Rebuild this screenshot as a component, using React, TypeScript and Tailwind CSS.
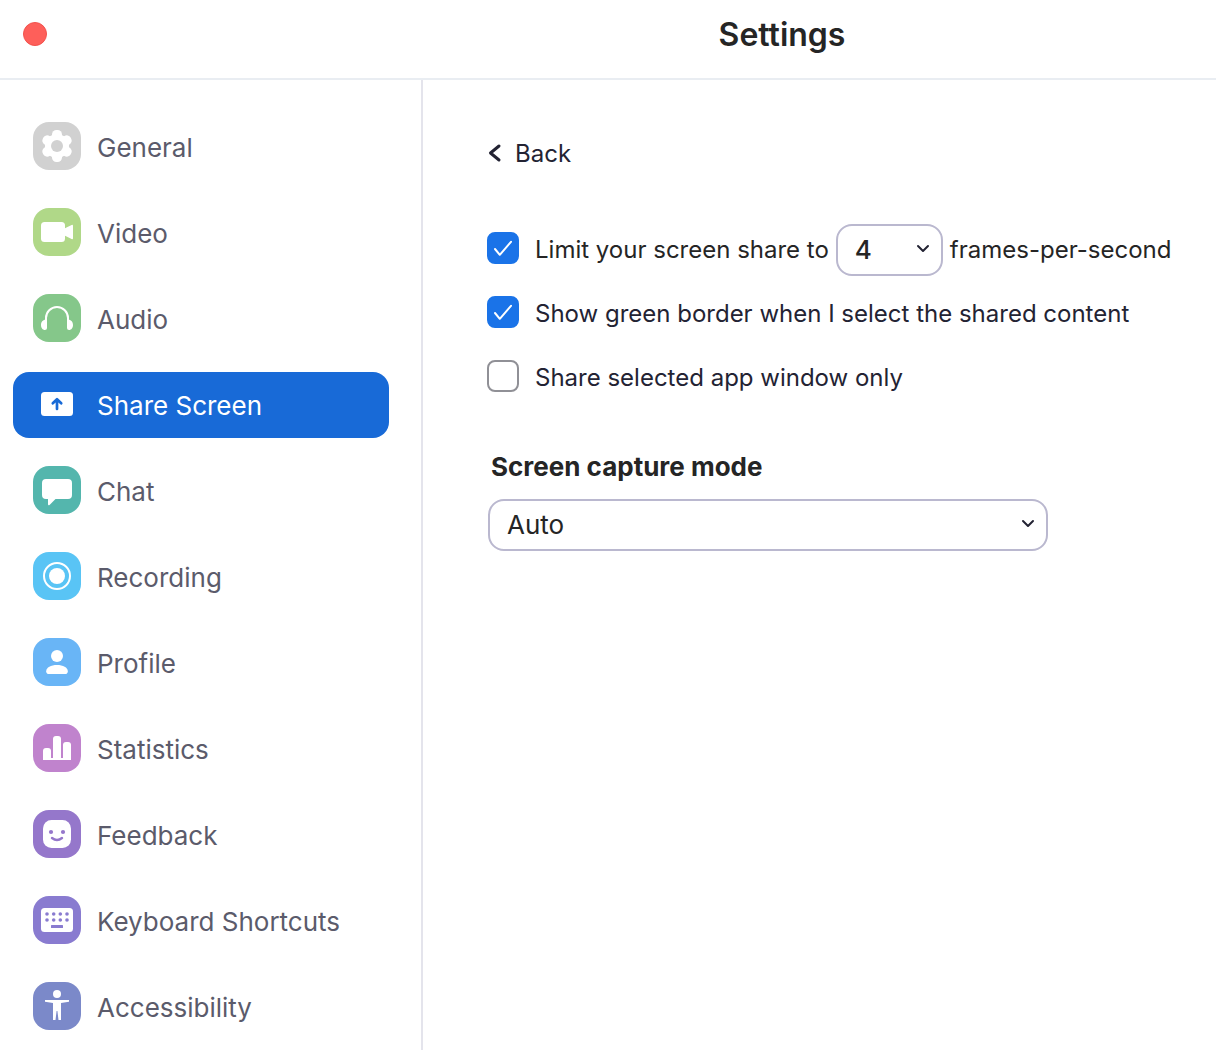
import { useState, type ReactNode } from "react";

type Item = { label: string; tile: string; icon: ReactNode };

const items: Item[] = [
  {
    label: "General",
    tile: "bg-[#d1d1d1]",
    icon: (
      <>
        <g fill="#fff">
          <circle cx="24" cy="24" r="12" />
          <rect x="19" y="8" width="10" height="32" rx="4.500" />
          <rect x="19" y="8" width="10" height="32" rx="4.500" transform="rotate(60 24 24)" />
          <rect x="19" y="8" width="10" height="32" rx="4.500" transform="rotate(120 24 24)" />
        </g>
        <circle cx="24" cy="24" r="6" fill="#d1d1d1" />
      </>
    ),
  },
  {
    label: "Video",
    tile: "bg-[#b0d888]",
    icon: (
      <g fill="#fff">
        <rect x="8" y="14" width="24" height="20" rx="3.5" />
        <path d="M32 20.3 38.6 17q1.4-.6 1.4.8v12.4q0 1.4-1.4.8L32 27.7z" />
      </g>
    ),
  },
  {
    label: "Audio",
    tile: "bg-[#85c78a]",
    icon: (
      <>
        <path d="M13 28V24a11 11 0 0 1 22 0v4" fill="none" stroke="#fff" strokeWidth="2" />
        <path d="M14 25.800V34q0 2-2 2C9.500 36 8 33.700 8 31c0-2.800 1.800-5.200 4.400-5.200zM34 25.800V34q0 2 2 2c2.500 0 4-2.300 4-5 0-2.800-1.800-5.200-4.400-5.200z" fill="#fff" />
      </>
    ),
  },
  {
    label: "Share Screen",
    tile: "bg-transparent",
    icon: (
      <>
        <rect x="8" y="12" width="32" height="24" rx="3.5" fill="#fff" />
        <path d="M24 29V19.500M19.800 23.200 24 19.200l4.200 4" fill="none" stroke="#186ad7" strokeWidth="2.700" strokeLinecap="round" strokeLinejoin="round" />
      </>
    ),
  },
  {
    label: "Chat",
    tile: "bg-[#54b6ad]",
    icon: (
      <path d="M13 13h22a4 4 0 0 1 4 4v12a4 4 0 0 1-4 4H22.500l-5.700 5.700Q15 40 15 38V33h-2a4 4 0 0 1-4-4V17a4 4 0 0 1 4-4z" fill="#fff" />
    ),
  },
  {
    label: "Recording",
    tile: "bg-[#59c4f5]",
    icon: (
      <>
        <circle cx="24" cy="24" r="13" fill="none" stroke="#fff" strokeWidth="2" />
        <circle cx="24" cy="24" r="8" fill="#fff" />
      </>
    ),
  },
  {
    label: "Profile",
    tile: "bg-[#69b5f6]",
    icon: (
      <g fill="#fff">
        <circle cx="24" cy="18" r="6" />
        <path d="M16 36q-2.800 0-2.800-2.800C13.200 29.500 18 27 24 27s10.800 2.500 10.800 6.200Q34.800 36 32 36z" />
      </g>
    ),
  },
  {
    label: "Statistics",
    tile: "bg-[#c083cd]",
    icon: (
      <g fill="#fff">
        <path d="M10 36V27a3 3 0 0 1 3-3h2a3 3 0 0 1 3 3v9z" />
        <path d="M20 36V15a3 3 0 0 1 3-3h2a3 3 0 0 1 3 3v21z" />
        <path d="M30 36V21a3 3 0 0 1 3-3h2a3 3 0 0 1 3 3v15z" />
        <rect x="10" y="34" width="28" height="2" />
      </g>
    ),
  },
  {
    label: "Feedback",
    tile: "bg-[#9577cb]",
    icon: (
      <>
        <rect x="10" y="10" width="28" height="28" rx="8.500" fill="#fff" />
        <g fill="#9577cb">
          <circle cx="18" cy="22" r="2.100" />
          <circle cx="30" cy="22" r="2.100" />
        </g>
        <path d="M19 28q5 4 10 0" fill="none" stroke="#9577cb" strokeWidth="2.400" strokeLinecap="round" />
      </>
    ),
  },
  {
    label: "Keyboard Shortcuts",
    tile: "bg-[#897bd0]",
    icon: (
      <>
        <rect x="8" y="12" width="32" height="24" rx="3.500" fill="#fff" />
        <g fill="#897bd0">
          {[14, 20.7, 27.300, 34].map((cx) => (
            <g key={cx}>
              <circle cx={cx} cy="18" r="1.800" />
              <circle cx={cx} cy="24" r="1.800" />
            </g>
          ))}
          <rect x="18" y="29" width="12" height="3" rx="0.500" />
        </g>
      </>
    ),
  },
  {
    label: "Accessibility",
    tile: "bg-[#7b89c9]",
    icon: (
      <g fill="#fff">
        <circle cx="24" cy="12" r="4" />
        <path d="M12 18h24v1.800L28 21v17h-2.500L24.400 29h-.8L22.500 38H20V21l-8-1.200z" />
      </g>
    ),
  },
];

function Chevron() {
  return (
    <svg viewBox="0 0 14 10" className="pointer-events-none col-start-1 row-start-1 mr-[13px] mb-1 h-[10px] w-[14px] self-center justify-self-end" aria-hidden="true">
      <path d="M2 3l5 5 5-5" fill="none" stroke="#232333" strokeWidth="2" strokeLinecap="round" strokeLinejoin="round" />
    </svg>
  );
}

function Check({ id, label, initial }: { id: string; label: string; initial: boolean }) {
  const [on, setOn] = useState(initial);
  return (
    <>
      <span className="mb-1 grid shrink-0">
        <input
          id={id}
          type="checkbox"
          checked={on}
          onChange={(e) => setOn(e.target.checked)}
          className="col-start-1 row-start-1 size-8 appearance-none rounded-lg border-2 border-[#909096] bg-white checked:border-[#1a73e8] checked:bg-[#1a73e8]"
        />
        {on && (
          <svg viewBox="0 0 32 32" className="pointer-events-none col-start-1 row-start-1 size-8" aria-hidden="true">
            <path d="M8 17 12.800 22.800 24 9.800" fill="none" stroke="#fff" strokeWidth="2" strokeLinecap="round" strokeLinejoin="round" />
          </svg>
        )}
      </span>
      <label htmlFor={id} className="ml-4 whitespace-nowrap">{label}</label>
    </>
  );
}

export default function App() {
  const [active, setActive] = useState("Share Screen");
  return (
    <div className="flex min-h-screen flex-col bg-white font-['Inter',sans-serif] text-[#232333]">
      <header className="flex items-center border-b-2 border-[#e9edf2] pt-3 pb-5">
        <div className="w-[348px] shrink-0 pb-0.5 pl-[23px]">
          <button aria-label="Close" className="block size-6 rounded-full border border-[#f2524d] bg-[#fe5f5a]" />
        </div>
        <h1 className="flex-1 text-center text-[32px] leading-[46px] font-semibold text-[#252525]">Settings</h1>
      </header>
      <div className="flex flex-1">
        <nav className="flex w-[423px] shrink-0 flex-col gap-5 border-r-2 border-[#e4e4ec] pt-[34px] pr-8 pl-[13px]">
          {items.map((it) => (
            <button
              key={it.label}
              onClick={() => setActive(it.label)}
              aria-current={it.label === active ? "page" : undefined}
              className={
                it.label === active
                  ? "flex items-start gap-4 rounded-2xl bg-[#186ad7] px-5 pt-2 pb-1.5 text-left text-white"
                  : "flex items-start gap-4 rounded-2xl px-5 pt-2 pb-1.5 text-left text-[#5b5b6b]"
              }
            >
              <span className={`size-12 shrink-0 rounded-2xl ${it.tile}`}>
                <svg viewBox="0 0 48 48" className="size-12" aria-hidden="true">{it.icon}</svg>
              </span>
              <span className="text-[26px] leading-[52px] whitespace-nowrap">{it.label}</span>
            </button>
          ))}
        </nav>
        <main className="flex-1 pt-14 pr-8 pl-16 text-[24px] leading-9">
          <button className="flex items-center gap-3">
            <svg viewBox="0 0 16 20" className="mb-0.5 h-5 w-4" aria-hidden="true">
              <path d="M12 3 3.500 10l8.500 7" fill="none" stroke="#232333" strokeWidth="3" strokeLinecap="round" strokeLinejoin="round" />
            </svg>
            Back
          </button>
          <div className="mt-[52px] flex items-center text-[#252525]">
            <Check id="limit" label="Limit your screen share to" initial={true} />
            <span className="mx-[7px] grid w-[107px] shrink-0">
              <select aria-label="Frames per second" defaultValue="4" className="col-start-1 row-start-1 h-[52px] w-full appearance-none rounded-2xl border-2 border-[#bab8cf] bg-white px-[17px] text-[26px] font-medium text-[#252525]">
                <option>4</option>
                <option>8</option>
                <option>15</option>
              </select>
              <Chevron />
            </span>
            <span className="whitespace-nowrap">frames-per-second</span>
          </div>
          <div className="mt-5 flex items-center">
            <Check id="border" label="Show green border when I select the shared content" initial={true} />
          </div>
          <div className="mt-7 flex items-center">
            <Check id="window" label="Share selected app window only" initial={false} />
          </div>
          <label htmlFor="mode" className="mt-[53px] block pl-1 text-[26px] font-bold text-[#252525]">Screen capture mode</label>
          <div className="mt-[14px] grid max-w-[561px] pl-px">
            <select id="mode" defaultValue="Auto" className="col-start-1 row-start-1 h-[52px] w-full appearance-none rounded-2xl border-2 border-[#bab8cf] bg-white px-[17px] text-[26px] text-[#252525]">
              <option>Auto</option>
              <option>Manual</option>
            </select>
            <Chevron />
          </div>
        </main>
      </div>
    </div>
  );
}
